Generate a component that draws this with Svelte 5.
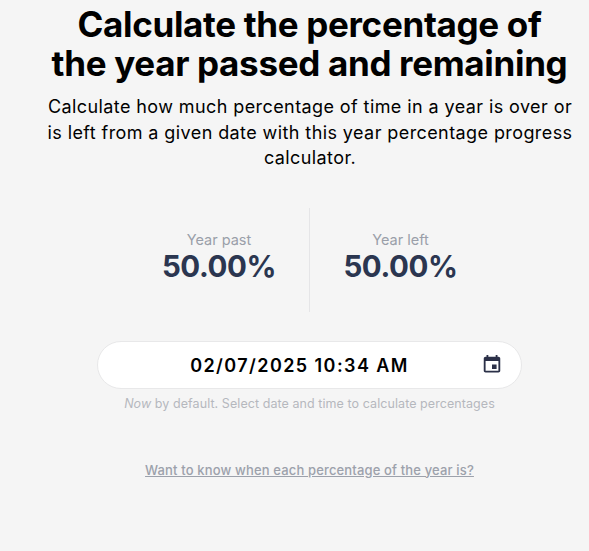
<script lang="ts">
	let date = $state('02/07/2025 10:34 AM');

	const stats = [
		{ label: 'Year past', value: 50 },
		{ label: 'Year left', value: 50 }
	];
</script>

<main class="page">
	<h1 class="title">Calculate the percentage of<br />the year passed and remaining</h1>
	<p class="intro">
		Calculate how much percentage of time in a year is over or<br />
		is left from a given date with this year percentage progress<br />
		calculator.
	</p>

	<section class="stats">
		{#each stats as stat (stat.label)}
			<div class="stat">
				<span class="stat-label">{stat.label}</span>
				<span class="stat-value">{stat.value.toFixed(2)}%</span>
			</div>
		{/each}
	</section>

	<div class="date-field">
		<span class="date-value">{date}</span>
		<button class="date-button" aria-label="Select date">
			<svg viewBox="0 0 24 24" width="22" height="21" preserveAspectRatio="none">
				<path d="M17 12h-5v5h5v-5zM16 1v2H8V1H6v2H5c-1.11 0-1.99.9-1.99 2L3 19c0 1.1.89 2 2 2h14c1.1 0 2-.9 2-2V5c0-1.1-.9-2-2-2h-1V1h-2zm3 18H5V8h14v11z" />
			</svg>
		</button>
	</div>
	<p class="hint"><em>Now</em> by default. Select date and time to calculate percentages</p>

	<a class="more" href="#percentages">Want to know when each percentage of the year is?</a>
</main>

<style>
	:global(body) {
		background: #f5f5f5;
	}

	.page {
		display: flex;
		flex-direction: column;
		align-items: center;
		box-sizing: border-box;
		min-height: 551px;
		padding: 5px 0 0 30px;
		font-family: Inter, sans-serif;
		color: #000;
		text-align: center;
		white-space: nowrap;
	}

	.title {
		margin: 0;
		font-size: 35px;
		font-weight: 700;
		line-height: 39px;
		letter-spacing: -0.32px;
	}

	.intro {
		margin: 11px 0 0;
		padding-left: 1px;
		font-size: 18px;
		line-height: 25.5px;
		letter-spacing: 0.41px;
	}

	.stats {
		display: flex;
		height: 104px;
		margin-top: 37px;
	}

	.stat {
		display: flex;
		flex-direction: column;
		justify-content: center;
		align-items: center;
		width: 181px;
		padding: 0 0 6px 1px;
		box-sizing: border-box;
	}

	.stat:first-child {
		width: 180px;
		padding-left: 0;
	}

	.stat + .stat {
		border-left: 1px solid #e5e5e7;
	}

	.stat-label {
		font-size: 14.5px;
		line-height: 20px;
		color: #9a9fa9;
	}

	.stat-value {
		font-size: 29.5px;
		font-weight: 700;
		line-height: 33px;
		letter-spacing: -0.4px;
		color: #2b3650;
	}

	.date-field {
		display: flex;
		align-items: center;
		box-sizing: border-box;
		width: 425px;
		height: 48px;
		margin-top: 29px;
		padding: 0 18px 0 20px;
		background: #fff;
		border: 1px solid #e8e8e9;
		border-radius: 24px;
	}

	.date-value {
		flex: 1;
		padding-top: 1px;
		font-size: 18px;
		font-weight: 600;
		letter-spacing: 1.42px;
	}

	.date-button {
		display: flex;
		padding: 0;
		border: 0;
		background: none;
		cursor: pointer;
	}

	.date-button svg {
		fill: #2b3048;
	}

	.hint {
		margin: 6px 0 0;
		font-size: 12.5px;
		line-height: 18px;
		letter-spacing: 0.07px;
		color: #b5b8be;
	}

	.more {
		margin-top: 48px;
		font-size: 13px;
		font-weight: 500;
		line-height: 18px;
		letter-spacing: 0.15px;
		color: #9ca1ab;
	}
</style>
